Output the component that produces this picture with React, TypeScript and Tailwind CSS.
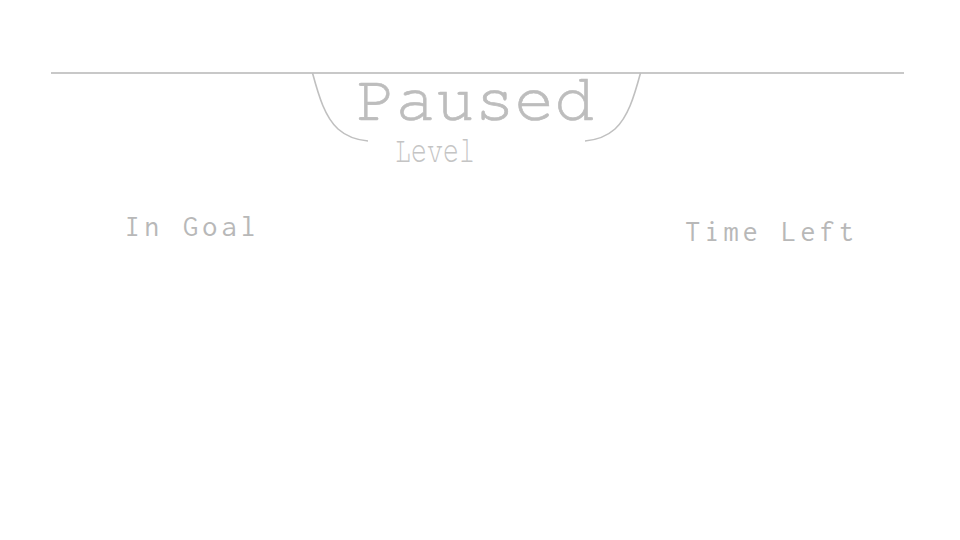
export default function App() {
  return (
    <div className="h-[540px] w-[960px] overflow-hidden bg-white">
      <div className="pt-[72px]">
        <div className="ml-[51px] mr-[56px] border-t-2 border-[#c8c8c8]" />
        <div className="flex justify-center">
          <div className="relative ml-[-6px] h-[72px] w-[332px]">
            <svg
              className="absolute left-0 top-[-2px]"
              width="332"
              height="72"
              viewBox="0 0 332 72"
              fill="none"
              stroke="#c0c0c0"
              strokeWidth="1.6"
              aria-hidden
            >
              <path d="M1.5 1 C8 25 14 45 27 57 C36 65 46 68 57 69" />
              <path d="M329.5 1 C323 25 317 45 304 57 C295 65 285 68 274 69" />
            </svg>
            <p className="pr-[4px] text-center font-['FreeMono',monospace] text-[66px] leading-[52px] text-[#bdbdbd] [-webkit-text-stroke:0.7px_#bdbdbd]">
              Paused
            </p>
          </div>
        </div>
        <p className="ml-[395px] mt-[-11px] leading-[32px]">
          <span className="inline-block origin-left scale-x-[0.72] font-['FreeMono',monospace] text-[37px] text-[#c4c4c4]">
            Level
          </span>
        </p>
      </div>
      <div className="mt-[39px] flex items-start justify-between pl-[125px] pr-[102px]">
        <span className="font-['Inconsolata',monospace] text-[30px] leading-[30px] tracking-[4.3px] text-[#b8b8b8]">
          In Goal
        </span>
        <span className="mt-[5px] font-['Inconsolata',monospace] text-[30px] leading-[30px] tracking-[4.2px] text-[#b8b8b8]">
          Time Left
        </span>
      </div>
    </div>
  );
}
